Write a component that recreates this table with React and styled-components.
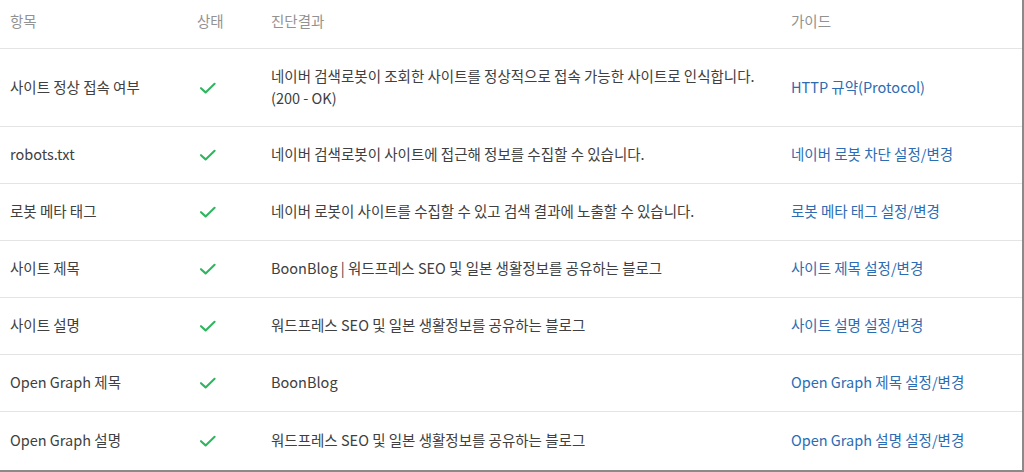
import React from "react";
import styled, { createGlobalStyle } from "styled-components";

const Global = createGlobalStyle`
  html, body { margin: 0; padding: 0; background: #fff; }
  body { font-family: "Noto Sans CJK KR", "Noto Sans", sans-serif; }
`;

const Frame = styled.div`
  width: 1024px;
  height: 472px;
  box-sizing: border-box;
  border-right: 2px solid #8a8a8a;
  border-bottom: 2px solid #8a8a8a;
  background: #fff;
  overflow: hidden;
`;

const Row = styled.div`
  display: grid;
  grid-template-columns: 187px 74px 520px 1fr;
  align-items: center;
  height: ${(p) => p.$h}px;
  border-bottom: ${(p) => (p.$last ? "none" : "1px solid #e4e4e4")};
  box-sizing: border-box;
`;

const HeadCell = styled.div`
  padding-left: 10px;
  font-size: 14.5px;
  color: #929292;
  padding-bottom: 8px;
`;

const Cell = styled.div`
  padding-left: 10px;
  font-size: 14.5px;
  line-height: 22px;
  color: ${(p) => (p.$link ? "#2b6cb3" : "#404040")};
  padding-bottom: 2px;
`;

const CheckCell = styled.div`
  padding-left: 12px;
  display: flex;
  align-items: center;
`;

const Check = () => (
  <svg width="18" height="14" viewBox="0 0 18 14">
    <path d="M2 7.2 L6.6 11.4 L15.6 2.8" fill="none" stroke="#2fb45f" strokeWidth="2.1" strokeLinecap="round" strokeLinejoin="round" />
  </svg>
);

const rows = [
  ["사이트 정상 접속 여부", ["네이버 검색로봇이 조회한 사이트를 정상적으로 접속 가능한 사이트로 인식합니다.", "(200 - OK)"], "HTTP 규약(Protocol)"],
  ["robots.txt", ["네이버 검색로봇이 사이트에 접근해 정보를 수집할 수 있습니다."], "네이버 로봇 차단 설정/변경"],
  ["로봇 메타 태그", ["네이버 로봇이 사이트를 수집할 수 있고 검색 결과에 노출할 수 있습니다."], "로봇 메타 태그 설정/변경"],
  ["사이트 제목", ["BoonBlog | 워드프레스 SEO 및 일본 생활정보를 공유하는 블로그"], "사이트 제목 설정/변경"],
  ["사이트 설명", ["워드프레스 SEO 및 일본 생활정보를 공유하는 블로그"], "사이트 설명 설정/변경"],
  ["Open Graph 제목", ["BoonBlog"], "Open Graph 제목 설정/변경"],
  ["Open Graph 설명", ["워드프레스 SEO 및 일본 생활정보를 공유하는 블로그"], "Open Graph 설명 설정/변경"],
];

const heights = [78, 57, 57, 57, 57, 57, 58];

export default function App() {
  return (
    <>
      <Global />
      <Frame>
        <Row $h={49}>
          <HeadCell>항목</HeadCell>
          <HeadCell>상태</HeadCell>
          <HeadCell>진단결과</HeadCell>
          <HeadCell>가이드</HeadCell>
        </Row>
        {rows.map(([name, result, guide], i) => (
          <Row key={i} $h={heights[i]} $last={i === rows.length - 1}>
            <Cell>{name}</Cell>
            <CheckCell>
              <Check />
            </CheckCell>
            <Cell>
              {result.map((l, j) => (
                <div key={j}>{l}</div>
              ))}
            </Cell>
            <Cell $link>{guide}</Cell>
          </Row>
        ))}
      </Frame>
    </>
  );
}
